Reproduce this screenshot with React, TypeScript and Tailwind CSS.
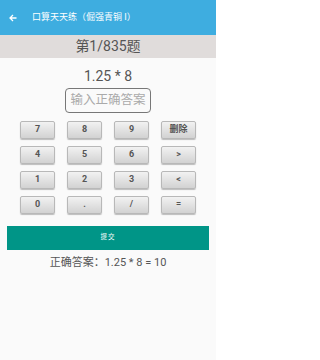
const keys = ["7", "8", "9", "删除", "4", "5", "6", ">", "1", "2", "3", "<", "0", ".", "/", "="];

const font = { fontFamily: 'Roboto, "Noto Sans CJK SC", sans-serif' };

export default function App() {
  return (
    <div className="w-[216px] h-[360px] bg-[#fafafa] flex flex-col" style={font}>
      {/* toolbar */}
      <div className="h-[35px] bg-[#3eade0] flex items-center shrink-0">
        <svg className="ml-[9px]" width="8" height="8" viewBox="0 0 8 8" fill="none" stroke="white" strokeWidth="1.3">
          <path d="M7.5 4H1M4 1L1 4l3 3" />
        </svg>
        <span className="ml-[15px] text-[9px] text-white">口算天天练（倔强青铜 I）</span>
      </div>

      {/* progress */}
      <div className="h-[23px] bg-[#e0dcdb] flex items-center justify-center shrink-0">
        <span className="text-[14px] text-[#555]">第1/835题</span>
      </div>

      <div className="mt-[10px] text-center text-[14px] leading-[16px] text-[#555]">1.25 * 8</div>

      <div className="mt-[4px] mx-auto w-[86px] h-[25px] border border-[#777] rounded-[4px] flex items-center justify-center">
        <span className="text-[12.5px] text-[#aaa]">输入正确答案</span>
      </div>

      {/* keypad */}
      <div className="mt-[8px] mx-auto w-[176px] grid grid-cols-4 gap-x-[12px] gap-y-[7px]">
        {keys.map((k) => (
          <button
            key={k}
            className="h-[18px] rounded-[2px] border border-[#b8b8b8] bg-gradient-to-b from-[#f2f2f2] to-[#d2d2d2] shadow-[0_1px_1px_rgba(0,0,0,0.25)] flex items-center justify-center text-[9px] font-bold text-[#555]"
          >
            {k}
          </button>
        ))}
      </div>

      <button className="mt-[12px] mx-[7px] h-[24px] bg-[#009587] flex items-center justify-center text-white text-[6.5px] tracking-[1px]">
        提交
      </button>

      <div className="mt-[6px] text-center text-[11px] leading-[14px] text-[#555]">正确答案：1.25 * 8 = 10</div>
    </div>
  );
}
